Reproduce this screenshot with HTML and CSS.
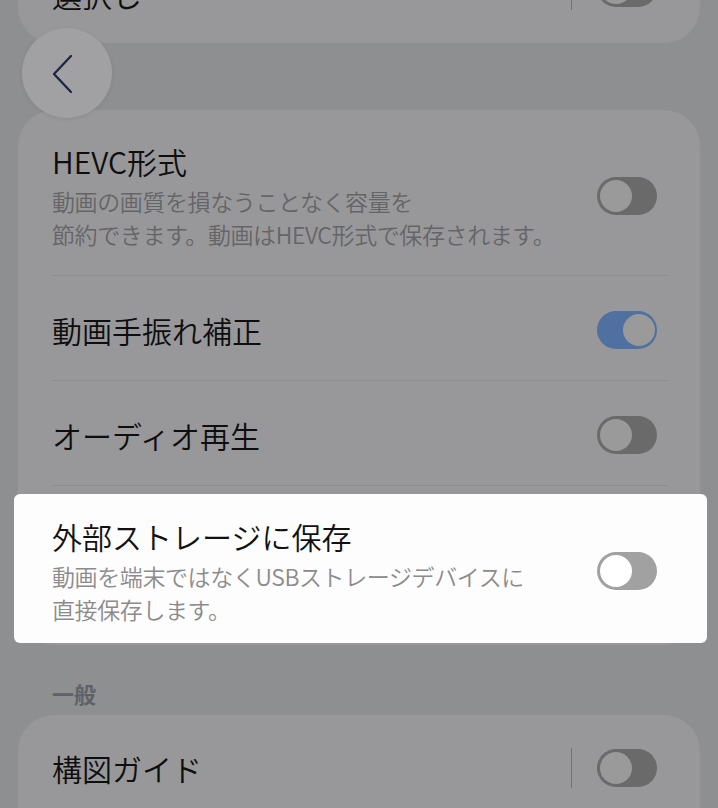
FILE: index.html
```html
<!DOCTYPE html>
<html lang="ja">
<head>
<meta charset="utf-8">
<title>カメラ設定</title>
<link rel="stylesheet" href="styles.css">
</head>
<body>
<div class="screen">
  <section class="card card-top">
    <div class="row">
      <div class="text"><div class="title">選択し</div></div>
      <span class="vdiv vdiv-top"></span>
      <span class="toggle toggle-top"><span class="knob"></span></span>
    </div>
  </section>

  <section class="card card-video">
    <div class="row row-first">
      <div class="text">
        <div class="title">HEVC形式</div>
        <div class="sub">動画の画質を損なうことなく容量を<br>節約できます。動画はHEVC形式で保存されます。</div>
      </div>
      <span class="toggle"><span class="knob"></span></span>
    </div>
    <div class="row row-single">
      <div class="text"><div class="title">動画手振れ補正</div></div>
      <span class="toggle on"><span class="knob"></span></span>
    </div>
    <div class="row row-single">
      <div class="text"><div class="title">オーディオ再生</div></div>
      <span class="toggle"><span class="knob"></span></span>
    </div>
    <div class="row row-highlight">
      <div class="text">
        <div class="title">外部ストレージに保存</div>
        <div class="sub">動画を端末ではなくUSBストレージデバイスに<br>直接保存します。</div>
      </div>
      <span class="toggle"><span class="knob"></span></span>
    </div>
  </section>

  <h2 class="section-header">一般</h2>

  <section class="card card-general">
    <div class="row row-general">
      <div class="text"><div class="title">構図ガイド</div></div>
      <span class="vdiv"></span>
      <span class="toggle"><span class="knob"></span></span>
    </div>
  </section>

  <button class="back" aria-label="戻る">
    <svg width="24" height="40" viewBox="0 0 24 40" aria-hidden="true">
      <polyline points="20,2 3,20 20,38" fill="none" stroke="#1d2744" stroke-width="2.3" stroke-linecap="round" stroke-linejoin="round"/>
    </svg>
  </button>
</div>
</body>
</html>
```

FILE: styles.css
```css
html, body {
  margin: 0;
  padding: 0;
}

body {
  background: #8e8f91;
  font-family: "Noto Sans CJK JP", "Noto Sans", sans-serif;
  color: #0e0e0e;
}

.screen {
  position: relative;
  width: 718px;
  height: 808px;
  overflow: hidden;
  display: flex;
  flex-direction: column;
  background: #8e8f91;
}

.card {
  margin-left: 18px;
  margin-right: 18px;
  background: #98989a;
  border-radius: 36px;
  flex: none;
}

.card-top {
  margin-top: -42px;
  height: 85px;
  border-radius: 0 0 36px 36px;
  box-sizing: border-box;
}

.card-video {
  margin-top: 67px;
}

.card-general {
  margin-top: 7px;
  border-radius: 36px 36px 0 0;
  height: 120px;
}

.row {
  position: relative;
  z-index: 0;
  display: flex;
  align-items: center;
  margin: 0 32px 0 34px;
  padding-right: 11px;
}

.row + .row {
  border-top: 1px solid #8b8c8e;
}

.card-top .row {
  padding-top: 16px;
  padding-bottom: 29px;
}

.row-first {
  padding-top: 31px;
  padding-bottom: 24px;
}

.row-single {
  padding-top: 34px;
  padding-bottom: 30px;
}

.row-highlight {
  padding-top: 30px;
  padding-bottom: 19px;
}

.row-general {
  padding-top: 33px;
}

.text {
  flex: 1;
  min-width: 0;
}

.title {
  font-size: 30px;
  line-height: 40px;
  font-weight: 350;
  white-space: nowrap;
}

.sub {
  margin-top: 4px;
  font-size: 23px;
  line-height: 33px;
  letter-spacing: -0.4px;
  font-weight: 350;
  color: #656567;
  white-space: nowrap;
}

/* toggle switch */
.toggle {
  flex: none;
  display: flex;
  justify-content: flex-start;
  width: 60px;
  height: 38px;
  border-radius: 19px;
  background: #6a6a6b;
}

.toggle .knob {
  width: 32px;
  height: 32px;
  margin: 3px;
  border-radius: 50%;
  background: #9a9a9b;
}

.toggle.on {
  justify-content: flex-end;
  background: #4f70a0;
}

.toggle.on .knob {
  margin-right: 2px;
}

.toggle-top {
  margin-top: -12px;
}

.vdiv {
  flex: none;
  width: 1.5px;
  height: 40px;
  margin-right: 25px;
  background: #6f7072;
}

.vdiv-top {
  margin-top: -8px;
}

/* highlighted row */
.row-highlight::before {
  content: "";
  position: absolute;
  z-index: -1;
  top: 8px;
  bottom: 2px;
  left: -38px;
  right: -39px;
  background: #fdfdfd;
  border-radius: 6px;
}

.row-highlight .title {
  color: #111111;
}

.row-highlight .sub {
  color: #8b8b8c;
}

.row-highlight .toggle {
  background: #a1a1a2;
}

.row-highlight .toggle .knob {
  background: #ffffff;
}

.section-header {
  margin: 33px 0 0 52px;
  font-size: 22px;
  line-height: 30px;
  font-weight: 700;
  color: #5f6167;
  flex: none;
}

/* floating back button */
.back {
  position: absolute;
  left: 22px;
  top: 28px;
  width: 90px;
  height: 90px;
  padding: 0;
  border: none;
  border-radius: 50%;
  background: #a1a1a3;
  box-shadow: 0 1px 4px rgba(0, 0, 0, 0.08);
  display: flex;
  align-items: center;
  justify-content: center;
}

.back svg {
  margin-left: -8px;
  margin-top: 2px;
}
```
